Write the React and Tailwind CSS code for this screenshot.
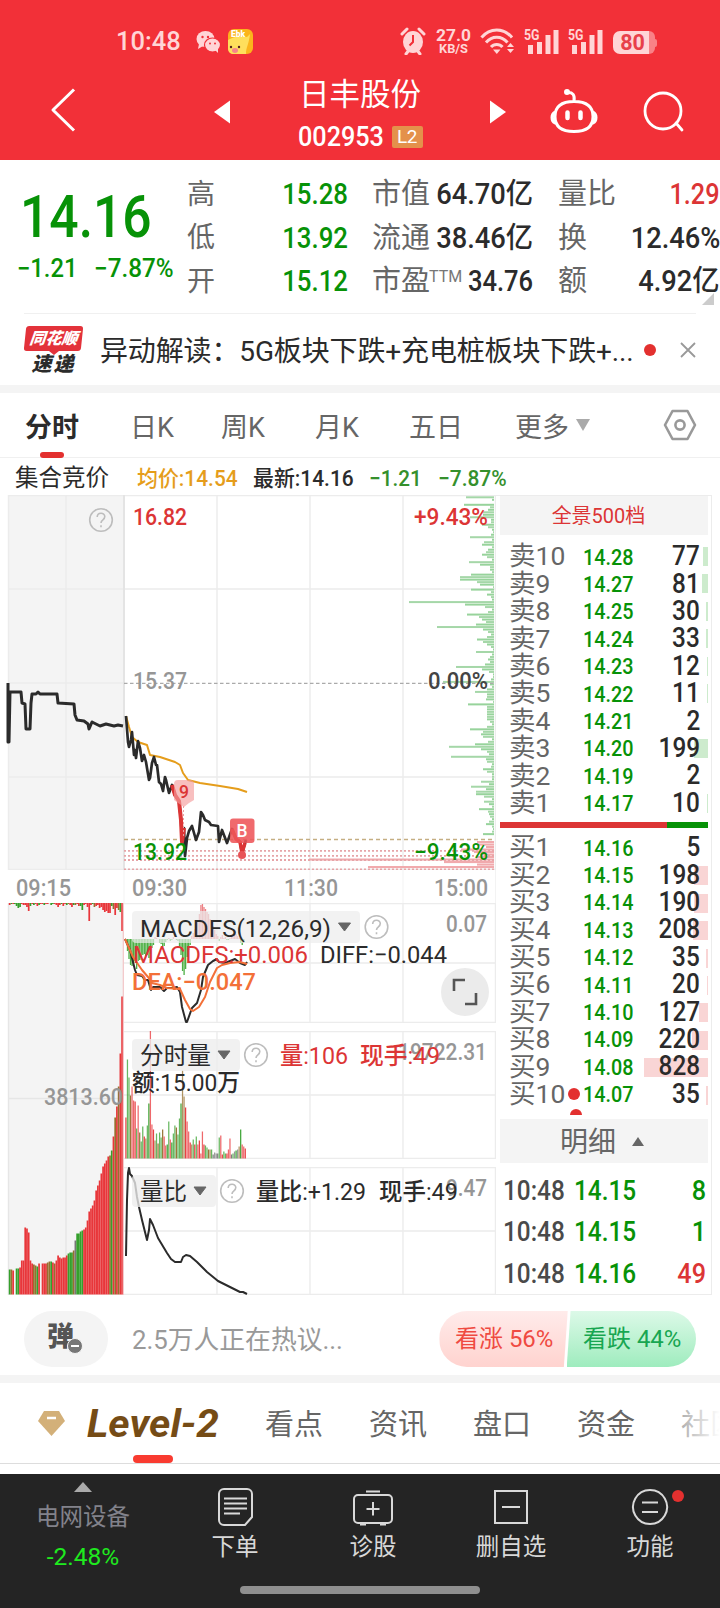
import { Fragment } from "react"

const GREEN = "#079207"
const RED = "#dc3535"
const GRAY = "#969696"
const DARK = "#2b2b2b"
const LINE = "#ececec"

const quoteRows = [
    ["高", "15.28", "市值", "64.70亿", "量比", "1.29"],
    ["低", "13.92", "流通", "38.46亿", "换", "12.46%"],
    ["开", "15.12", "市盈", "34.76", "额", "4.92亿"]
]

const sells = [
    ["卖10", "14.28", 77, 5],
    ["卖9", "14.27", 81, 6],
    ["卖8", "14.25", 30, 2],
    ["卖7", "14.24", 33, 2.5],
    ["卖6", "14.23", 12, 1],
    ["卖5", "14.22", 11, 1],
    ["卖4", "14.21", 2, 0],
    ["卖3", "14.20", 199, 14],
    ["卖2", "14.19", 2, 0],
    ["卖1", "14.17", 10, 0.6]
]

const buys = [
    ["买1", "14.16", 5, 0],
    ["买2", "14.15", 198, 14],
    ["买3", "14.14", 190, 14],
    ["买4", "14.13", 208, 15],
    ["买5", "14.12", 35, 2.5],
    ["买6", "14.11", 20, 1.3],
    ["买7", "14.10", 127, 9.5],
    ["买8", "14.09", 220, 16],
    ["买9", "14.08", 828, 64],
    ["买10", "14.07", 35, 2.5]
]

const trades = [
    ["10:48", "14.15", 8, "text-[#079207]"],
    ["10:48", "14.15", 1, "text-[#079207]"],
    ["10:48", "14.16", 49, "text-[#dc3535]"]
]

//挂单分布，每档 2.5px
const depth = [
    28, 2, 0, 30, 4, 6, 11, 11, 24, 3, 3, 12, 6, 2, 1, 3, 24, 2, 10, 12, 2, 6, 8, 12, 7, 2, 25, 14, 4, 4, 2, 23, 34, 34, 17, 14, 1,
    23, 3, 7, 3, 2, 85, 29, 9, 2, 6, 27, 15, 12, 8, 18, 57, 11, 6, 3, 7, 17, 11, 7, 3, 1, 18, 2, 4, 6, 4, 9, 38, 12, 5, 1, 1, 3, 51,
    4, 2, 7, 19, 7, 7, 8, 1, 26, 7, 7, 7, 7, 7, 7, 4, 2, 7, 24, 11, 13, 11, 2, 6, 19, 45, 13, 7, 5, 43, 8, 7, 2, 3, 11, 7, 2, 2, 2,
    13, 5, 23, 8, 18, 18, 10, 2, 10, 5, 2, 15, 6, 5, 4, 2, 5, 8, 2, 1, 2, 11
]
const depthBuy = [17, 17, 8, 33, 20, 14, 18, 185, 50, 17, 126]

const auctionLine = "8,683 8,742 9,742 10,692 21,692 22,703 25,704 26,729 30,729 31,703 32,694 36,694 38,692 40,694 57,694 58,703 74,704 75,715 77,720 84,721 88,724 89,729 92,722 96,724 100,726 106,724 114,726 118,725 123,726"
const priceLine = "126,716 128,742 129,747 131,740 132,732 134,755 135,750 136,758 138,741 140,748 142,761 144,755 146,762 149,780 150,778 152,763 154,757 156,765 157,765 159,782 161,784 163,791 165,777 166,780 169,793 172,785 175,795 179,801 181,820 182,842 184,828 185,856 187,838 189,831 192,826 196,840 199,832 201,812 203,815 205,820 209,822 211,825 218,826 219,842 222,830 227,843 232,829 236,839 240,842 242,853 245,843 246,840"
const avgLine = "126,716 129,727 132,737 138,742 147,745 150,755 160,757 175,762 180,765 183,773 188,780 200,783 220,786 238,789 247,792"

const auctionBars = [
    25, 25, 24, 0, 26, 26, 27, 34, 34, 67, 66, 62, 34, 31, 30, 29, 28, 31, 0, 31, 31, 31, 32, 33, 33, 32, 31, 34, 39, 37, 36, 37, 37,
    39, 41, 42, 42, 44, 54, 61, 61, 63, 64, 65, 67, 74, 83, 86, 89, 94, 104, 109, 114, 121, 128, 131, 134, 138, 139, 144, 158, 177,
    188, 208, 241, 298
]
const auctionColors = "gGr.ggrrrrrrrrGGgr.rrrGGgrGrrrrrrrgggGxggggrrrrrrrrrrrrrrrGgrGrGrr"

const auctionTop = [2, 1, 1, 1, 3, 5, 4, 1, 2, 2, 4, 8, 3, 1, 2, 1, 3, 2, 1, 1, 2, 1, 1, 0, 2, 1, 1, 2, 4, 2, 1, 3, 1, 2, 1, 2, 4, 2, 2, 1, 3, 3, 7, 2, 1, 4, 18, 2, 1, 4, 3, 2, 5, 4, 7, 9, 8, 10, 10, 3, 6, 12, 5, 7, 9, 28]
const auctionTopColors = "rgrggggrrrrrgrgrrgrrgrrrggrrrrgrrgGrrgGrrggrrrrrgGrrrrrrrrrgGrrGgr"

const volumeBars = [
    41, 99, 81, 63, 72, 58, 57, 30, 53, 26, 17, 32, 22, 20, 33, 55, 128, 34, 29, 18, 25, 15, 26, 21, 29, 22, 13, 14, 37, 19, 16, 25,
    33, 31, 24, 40, 55, 88, 62, 51, 37, 27, 16, 14, 19, 14, 22, 14, 18, 5, 27, 14, 13, 11, 9, 9, 9, 4, 6, 5, 5, 21, 23, 4, 7, 5, 5,
    9, 20, 4, 5, 7, 8, 9, 12, 29, 14, 12, 10
]
const volumeColors = "rggGrrrgrGggrGggrrrGgGggGrrggrgggGgggGGrrrrGgrgrrrrrggGGgxxxxgrrggrrrxgxgxGgrrr"

const macdBars = [
    0, -12, -20, -26, -27, -24, -22, -30, -22, -21, -18, -16, -15, -17, -16, -19, -15, -9, -6, 2, 1, 0, -4, -5, -8, -7, -3, -1, 1,
    -2, -1, 2, 0, -1, -2, -8, -16, -32, -36, -30, -18, -11, -6, 3, 6, 10, 13, 18, 25, 34, 35, 32, 30, 27, 25, 20, 17, 13, 9, 5, 3,
    -2, 2, 4, 1, 2, -1, -1, 1, 4, 5, 4, 5, 3, 1, -4, -6, -3, 0
]

const barFill = { r: "#e8363a", g: "#35a02c", G: "#96702f", x: "#777777" }

const diffLine = "125,939 130,950 135,970 137,975 142,976 145,980 148,980 151,990 153,987 160,987 164,991 167,988 172,988 177,987 180,992 182,1007 186,1022 187,1022 192,1008 197,1003 201,990 203,977 208,965 213,961 217,959 219,962 225,963 230,961 235,959 240,963 245,965 247,962"
const deaLine = "125,939 133,957 142,970 148,977 152,983 160,985 167,988 180,989 185,1000 190,1009 193,1011 199,1007 205,997 210,982 217,968 222,965 230,963 240,962 247,964"
const ratioLine = "126,1256 127,1200 128,1173 129,1168 130,1174 132,1176 135,1183 137,1197 139,1207 142,1220 147,1240 149,1230 150,1219 153,1225 158,1238 167,1253 171,1259 175,1262 181,1262 183,1257 186,1255 190,1256 197,1262 207,1272 218,1281 230,1287 240,1292 243,1292 247,1294"

// 图表内文字，w 为文字占用宽度
function Label({ x, y, w, size = 24, fill = GRAY, weight = 500, children }) {
    return (
        <text x={x} y={y} fontSize={size} fontWeight={weight} fill={fill} textLength={w} lengthAdjust="spacingAndGlyphs">
            {children}
        </text>
    )
}

function Help({ x, y }) {
    return (
        <g fill="none" stroke="#bdbdbd" strokeWidth="1.6">
            <circle cx={x} cy={y} r="11.3" />
            <path d={`M${x - 3.8} ${y - 3}c0-5 7.6-5 7.6-.4c0 3.4-3.8 3-3.8 6.4M${x} ${y + 5.2}v2`} />
        </g>
    )
}

function Grid({ x, top, mid, bottom }) {
    return (
        <g stroke={LINE} strokeWidth="1.4">
            <path d={`M124 ${top}H496M124 ${mid}H496M124 ${bottom}H496`} />
            {x.map((v) => (
                <path key={v} d={`M${v} ${top}V${bottom}`} />
            ))}
        </g>
    )
}

function Arrow({ x, y }) {
    return <path d={`M${x - 6} ${y - 4}h12l-6 8z`} fill="#666" stroke="#666" strokeLinejoin="round" />
}

function StatusBar() {
    return (
        <div className="h-[82px] pt-[27px] pl-[116px] flex items-start text-[#ffd5d6]">
            <span className="w-[80px] text-[25.500px] leading-[29px] font-medium">10:48</span>
            <svg width="24" height="24" viewBox="0 0 24 24" className="mt-[3px]">
                <ellipse cx="9.5" cy="9" rx="9" ry="8" fill="currentColor" />
                <path d="M3 14l-1 5 5-3z" fill="currentColor" />
                <ellipse cx="16.5" cy="15" rx="8" ry="7" fill="currentColor" stroke="#f23038" strokeWidth="1.2" />
                <path d="M19 20l3 3v-5z" fill="currentColor" />
                <g fill="#f23038"><circle cx="6.5" cy="7" r="1.2" /><circle cx="12" cy="7" r="1.2" /><circle cx="14" cy="13.5" r="1" /><circle cx="19" cy="13.5" r="1" /></g>
            </svg>
            <svg width="25" height="25" viewBox="0 0 25 25" className="ml-[8px] mt-[2px]">
                <rect width="25" height="25" rx="6" fill="#fbb41c" />
                <path d="M0 11c6-4 13-4 19-3l3-3c-1 10-4 13-4 20H6c-4 0-6-2-6-6z" fill="#ffdf5c" />
                <text x="3" y="8" fontSize="8.5" fontWeight="900" fill="#fff">Ebk</text>
                <circle cx="3" cy="18" r="1.2" fill="#522" /><circle cx="11" cy="18" r="1.2" fill="#522" />
                <ellipse cx="7" cy="21.5" rx="3" ry="2.4" fill="#f7848a" />
            </svg>
            <svg width="26" height="28" viewBox="0 0 26 28" className="ml-[147px]">
                <ellipse cx="13" cy="15" rx="10" ry="11" fill="currentColor" />
                <path d="M2 7l5-5M24 7l-5-5M6 27l3-4M20 27l-3-4" stroke="currentColor" strokeWidth="3" strokeLinecap="round" />
                <path d="M13 8v7l-3.5 3.5" stroke="#f23038" strokeWidth="2" fill="none" />
            </svg>
            <svg width="38" height="28" viewBox="0 0 38 28" className="ml-[9px]" fill="currentColor">
                <text x="1" y="14" fontSize="17" fontWeight="700" textLength="35" lengthAdjust="spacingAndGlyphs">27.0</text>
                <text x="4" y="26" fontSize="12.500" fontWeight="700" textLength="29" lengthAdjust="spacingAndGlyphs">KB/S</text>
            </svg>
            <svg width="36" height="26" viewBox="0 0 36 26" className="ml-[7px] mt-[1px]" fill="none" stroke="currentColor" strokeWidth="3">
                <path d="M1.5 9.500C10-.5 23.500-.5 32 9.500M6 14.500c6-7 15.500-7 21.500 0M11 19c3-3.500 8.500-3.500 11.500 0" />
                <path d="M13 21.500h7.500L16.800 26z" fill="currentColor" stroke="none" />
                <path d="M27 19l3.500-4 3.500 4zM27 21l3.500 4 3.500-4z" fill="currentColor" stroke="none" />
            </svg>
            {[0, 1].map((i) => (
                <svg key={i} width="36" height="26" viewBox="-1 0 36 26" className="ml-[8px] mt-px" fill="currentColor">
                    <text x="-1" y="12" fontSize="14.500" fontWeight="700" textLength="15.500" lengthAdjust="spacingAndGlyphs">5G</text>
                    <path d="M3 17h5v9H3zM12 14h5v12h-5zM20.500 7h5v19h-5zM28.500 2h5v24h-5z" />
                </svg>
            ))}
            <div className="ml-[9px] mt-[4px] flex items-center">
                <div className="w-[36px] h-[23px] rounded-l-[7px] bg-[#ffd5d6] text-[#e8404a] text-[21.500px] leading-[24px] font-bold text-center pl-[3px]">80</div>
                <div className="w-[6px] h-[23px] rounded-r-[6px] bg-[#f98186]" />
                <div className="w-[2px] h-[8px] rounded-r bg-[#f98186]" />
            </div>
        </div>
    )
}

function Header() {
    return (
        <header className="h-[160px] bg-[#f23038] text-white">
            <StatusBar />
            <div className="h-[78px] flex">
                <svg width="210" height="78" viewBox="0 82 210 78" fill="none" stroke="#fff" strokeWidth="3">
                    <path d="M74 89.500L53 110l21 20.500" strokeLinejoin="round" />
                </svg>
                <svg width="21" height="78" viewBox="0 0 21 78" fill="#fff">
                    <path d="M20 18.500v23L4 30z" />
                </svg>
                <div className="w-[258px] flex flex-col items-center">
                    <div className="text-[30.500px] leading-[26px]">日丰股份</div>
                    <div className="mt-[17px] h-[24px] flex items-center">
                        <span className="w-[86px] text-[28px] font-medium origin-left scale-x-[.9] whitespace-nowrap">002953</span>
                        <span className="w-[31px] h-[22px] ml-[8px] bg-[#e4914b] text-[19px] leading-[22px] text-center rounded-[2px] tracking-[-0.500px]">L2</span>
                    </div>
                </div>
                <svg width="21" height="78" viewBox="0 0 21 78" fill="#fff">
                    <path d="M1 18.500v23L17 30z" />
                </svg>
                <svg width="210" height="78" viewBox="510 82 210 78" fill="none" stroke="#fff" strokeWidth="3" strokeLinecap="round">
                    <path d="M574 101.500c-16 0-19 8-19 15 0 9 5 15 19 15s19-6 19-15c0-7-3-15-19-15zM555 112c-4 2-4 9 0 11M593 112c4 2 4 9 0 11M574 101c1-6-1-9-7-8.500" />
                    <circle cx="567" cy="92" r="1.500" fill="#fff" />
                    <path d="M567.500 112.500v5.500M580.500 112.500v5.500" strokeWidth="4.500" />
                    <circle cx="663" cy="111" r="18" strokeWidth="2.800" />
                    <path d="M676 123l6 7" strokeWidth="2.800" />
                </svg>
            </div>
        </header>
    )
}

function Quote() {
    return (
        <section className="h-[153px] pt-[13px] flex overflow-hidden">
            <div className="w-[187px] text-[#079207]">
                <div className="ml-[20px] mt-[14px] h-[60px] text-[60px] leading-[60px] font-medium origin-left scale-x-[.86] whitespace-nowrap">14.16</div>
                <div className="ml-[17px] flex text-[25px] leading-[44px] font-medium">
                    <span className="w-[77px] origin-left scale-x-[.95]">−1.21</span>
                    <span className="origin-left scale-x-[.97]">−7.87%</span>
                </div>
            </div>
            <div className="w-[533px]">
                {quoteRows.map((r, i) => (
                    <div key={r[0]} className="h-[43.500px] flex items-center text-[29px] leading-none text-[#2b2b2b] whitespace-nowrap">
                        <span className="w-[50px] text-[#666] text-[28px]">{r[0]}</span>
                        <span className="w-[111px] flex justify-end font-medium text-[#079207]"><span className="origin-right scale-x-[.89]">{r[1]}</span></span>
                        <span className="w-[62px] ml-[24px] text-[#666]">
                            {r[2]}
                        </span>
                        {i === 2 && <span className="w-0 overflow-visible text-[16px] text-[#777] mb-[10px] ml-[-5px] mr-[5px]">TTM</span>}
                        <span className="w-[99px] flex justify-end font-medium">
                            <span className={i === 2 ? "origin-right scale-x-[.88]" : "origin-right scale-x-[.94]"}>{r[3]}</span>
                        </span>
                        <span className="w-[62px] ml-[25px] text-[#666] text-[29px]">{r[4]}</span>
                        <span className={i === 0 ? "flex-1 flex justify-end font-medium text-[#dc3535]" : "flex-1 flex justify-end font-medium"}>
                            <span className={i === 0 ? "origin-right scale-x-[.87]" : "origin-right scale-x-[.94]"}>{r[5]}</span>
                        </span>
                    </div>
                ))}
                <svg width="12" height="12" viewBox="0 0 12 12" className="ml-auto mr-[6px] mt-[-11px]"><path d="M12 0v12H0z" fill="#ccc" /></svg>
            </div>
        </section>
    )
}

function News() {
    return (
        <section className="mx-[24px] h-[72px] border-t border-[#f0f0f0] flex items-center">
            <div className="w-[57px] ml-px mr-px italic font-black text-center leading-none">
                <div className="h-[25px] bg-[#e3323a] rounded-[3px] -skew-x-6 text-white text-[16px] leading-[25px]">同花顺</div>
                <svg width="10" height="4" viewBox="0 0 10 4" className="mx-auto"><path d="M0 0h10L5 4z" fill="#e3323a" /></svg>
                <div className="text-[#2b2b2b] text-[20px] leading-[19px] tracking-[2px]">速递</div>
            </div>
            <div className="w-[536px] ml-[17px] pt-[4px] text-[28px] text-[#2b2b2b] whitespace-nowrap tracking-[-0.140px]">异动解读：5G板块下跌+充电桩板块下跌+...</div>
            <div className="w-[12px] h-[12px] ml-[8px] rounded-full bg-[#e3302f]" />
            <svg width="16" height="16" viewBox="0 0 16 16" className="ml-[24px] shrink-0" stroke="#999" strokeWidth="1.800"><path d="M1 1l14 14M15 1L1 15" /></svg>
        </section>
    )
}

function PeriodTabs() {
    return (
        <nav className="h-[65px] border-b border-[#f0f0f0] flex text-[27px] leading-[70px] text-[#666] whitespace-nowrap">
            <div className="w-[107px] pl-[25px] font-bold text-[#2b2b2b] relative">
                分时
                <span className="absolute left-[40px] bottom-[-1px] w-[24px] h-[6px] rounded-full bg-[#e3302f]" />
            </div>
            <div className="w-[91px] ml-[23px]">日K</div>
            <div className="w-[94px]">周K</div>
            <div className="w-[94px]">月K</div>
            <div className="w-[106px]">五日</div>
            <div>更多</div>
            <svg width="16" height="12" viewBox="0 0 16 12" className="mt-[26px] ml-[6px]"><path d="M1 0h14L8 12z" fill="#aaa" /></svg>
            <svg width="34" height="32" viewBox="0 0 34 32" className="mt-[16px] ml-[72px]" fill="none" stroke="#999" strokeWidth="2.600" strokeLinejoin="round">
                <path d="M9.500 2h15L32 16l-7.500 14h-15L2 16z" />
                <circle cx="17" cy="16" r="4.600" />
            </svg>
        </nav>
    )
}

function MinuteChart() {
    return (
        <svg width="496" height="375" viewBox="0 495 496 375">
            <rect x="8" y="495" width="116" height="375" fill="#f4f4f4" />
            <g stroke={LINE} strokeWidth="1.4">
                <path d="M8 495.500H496M8 589H496M8 777H496M8 869.500H496M8 683H124" />
                <path d="M8.500 495V870M66 495V870M217 495V870M310 495V870M403 495V870M495.500 495V870" />
                <path d="M124 495V870" strokeWidth="2" stroke="#e4e4e4" />
            </g>
            {depth.map((len, i) => (
                <rect key={i} x={494 - len} y={496.3 + i * 2.495} width={len} height="2" fill={i % 2 ? "#97d39b" : "#a5d7a8"} />
            ))}
            {depthBuy.map((len, i) => (
                <rect key={i} x={494 - len} y={841 + i * 2.5} width={len} height="2.1" fill="#f1aaad" />
            ))}
            <path d="M124 683.300H494" stroke="#aaa" strokeWidth="1.300" strokeDasharray="3.500 2.500" />
            <path d="M124 839.500H494" stroke="#c5ae82" strokeWidth="1.300" strokeDasharray="4 3" />
            <path d="M124 850.800H494M124 855.800H494M124 860H494M124 869.500H494" stroke="#e6a5a8" strokeWidth="1.800" strokeDasharray="2 2" />
            <Label x={133} y={525} w={54} fill={RED}>16.82</Label>
            <Label x={414} y={525} w={74} fill={RED}>+9.43%</Label>
            <Label x={133} y={689} w={54}>15.37</Label>
            <Label x={428} y={689} w={60} fill="#444">0.00%</Label>
            <Label x={414} y={859.500} w={74} fill={GREEN}>−9.43%</Label>
            <Help x={101} y={520} />
            <polyline points={auctionLine} fill="none" stroke={DARK} strokeWidth="3" strokeLinejoin="round" />
            <polyline points={avgLine} fill="none" stroke="#e59d1b" strokeWidth="2" strokeLinejoin="round" />
            <polyline points={priceLine} fill="none" stroke={DARK} strokeWidth="2.700" strokeLinejoin="round" />
            <polyline points="172,785 175,795 179,801 181,820 182,842 184,828" fill="none" stroke={RED} strokeWidth="4" strokeLinejoin="round" />
            <Label x={133} y={859.500} w={54} fill={GREEN}>13.92</Label>
            <path d="M183.500 806v32" stroke="#eba0a2" strokeDasharray="2 2" />
            <path d="M178 780h12a4 4 0 0 1 4 4v16l-5 3-5 4-6-4-4-3v-16a4 4 0 0 1 4-4z" fill="#f59c9c" fillOpacity=".65" />
            <Label x={179} y={798} w={10} size={18} fill={RED}>9</Label>
            <polyline points="232,829 236,839 240,842 242,853 245,843" fill="none" stroke={RED} strokeWidth="3.500" />
            <rect x="230" y="818.500" width="24.500" height="24.500" rx="3" fill="#ee5559" fillOpacity=".88" />
            <Label x={236.500} y={837} w={11} size={19} fill="#fff">B</Label>
            <circle cx="242" cy="855" r="4" fill="#e85357" />
        </svg>
    )
}

function TimeAxis() {
    return (
        <svg width="496" height="33" viewBox="0 870 496 33">
            <path d="M124 870v33M217 870v33M310 870v33M403 870v33M495.500 870v33" stroke="#f3f3f3" />
            <Label x={16} y={895.500} w={55}>09:15</Label>
            <Label x={132} y={895.500} w={55}>09:30</Label>
            <Label x={284} y={895.500} w={54}>11:30</Label>
            <Label x={434} y={895.500} w={54}>15:00</Label>
        </svg>
    )
}

function AuctionVolume() {
    return (
        <svg width="124" height="392" viewBox="0 903 124 392">
            <rect x="8" y="903" width="116" height="392" fill="#f4f4f4" />
            <path d="M8 903.500h116M8.500 903v392M66 903v392M8 1098.500h116" stroke="#e6e6e6" strokeWidth="1.400" />
            {auctionTop.map((h, i) => (
                <rect key={i} x={8.8 + i * 1.73} y="903" width="1.73" height={h} fill={barFill[auctionTopColors[i]]} />
            ))}
            {auctionBars.map((h, i) => (
                <rect key={i} x={8.8 + i * 1.73} y={1294.5 - h} width="1.73" height={h} fill={barFill[auctionColors[i]] || "#f4f4f4"} />
            ))}
            <path d="M123.300 903v392" stroke="#f3c6c8" strokeWidth="1.200" />
            <Label x={44} y={1104.500} w={79}>3813.60</Label>
        </svg>
    )
}

function MacdChart() {
    return (
        <svg width="372" height="120" viewBox="124 903 372 120">
            <Grid x={[217, 310, 403, 495.5]} top={903.5} mid={963} bottom={1022.5} />
            {macdBars.map((h, i) => (
                <rect key={i} x={125.3 + i * 1.53} y={h > 0 ? 939 - h : 939} width="1.3" height={Math.abs(h)} fill={h > 0 ? "#ec8185" : "#4caf44"} />
            ))}
            <rect x="132" y="911" width="228" height="32" rx="4" fill="#ededed" fillOpacity=".7" />
            <polyline points={diffLine} fill="none" stroke={DARK} strokeWidth="2" strokeLinejoin="round" />
            <polyline points={deaLine} fill="none" stroke="#f37038" strokeWidth="2" strokeLinejoin="round" />
            <Label x={140} y={936.500} w={191} fill={DARK} weight={400}>MACDFS(12,26,9)</Label>
            <Arrow x={344.500} y={927} />
            <Help x={376.500} y={927} />
            <Label x={446} y={932} w={41}>0.07</Label>
            <Label x={133} y={963} w={175} fill={RED} weight={450}>MACDFS:+0.006</Label>
            <Label x={320} y={963} w={127} fill={DARK} weight={450}>DIFF:−0.044</Label>
            <Label x={132} y={990} w={124} fill="#f37038" weight={500}>DEA:−0.047</Label>
            <circle cx="465" cy="992" r="24" fill="#ebebeb" />
            <path d="M454 991v-11h11M476 993v11h-11" fill="none" stroke="#555" strokeWidth="2.600" />
        </svg>
    )
}

function VolumeChart() {
    return (
        <svg width="372" height="128" viewBox="124 1031 372 128">
            <Grid x={[217, 310, 403, 495.5]} top={1031.5} mid={1095} bottom={1158.500} />
            {volumeBars.map((h, i) => (
                <rect key={i} x={125.3 + i * 1.53} y={1158.500 - h} width="1.250" height={h} fill={barFill[volumeColors[i]]} fillOpacity={i % 3 ? ".75" : ".95"} />
            ))}
            <rect x="132" y="1039" width="108" height="32" rx="4" fill="#ededed" fillOpacity=".78" />
            <Label x={140} y={1064} w={71} fill={DARK} weight={400}>分时量</Label>
            <Arrow x={224} y={1055} />
            <Help x={256} y={1055} />
            <Label x={398} y={1060} w={89}>19722.31</Label>
            <Label x={280} y={1064} w={68} fill={RED} weight={450}>量:106</Label>
            <Label x={360} y={1064} w={80} fill={RED} weight={450}>现手:49</Label>
            <Label x={132} y={1091} w={108} fill={DARK} weight={450}>额:15.00万</Label>
        </svg>
    )
}

function RatioChart() {
    return (
        <svg width="372" height="128" viewBox="124 1167 372 128">
            <Grid x={[217, 310, 403, 495.5]} top={1167.5} mid={1231} bottom={1294.5} />
            <polyline points={ratioLine} fill="none" stroke={DARK} strokeWidth="2" strokeLinejoin="round" />
            <rect x="132" y="1175" width="84" height="32" rx="4" fill="#ededed" fillOpacity=".78" />
            <Label x={140} y={1200} w={47} fill={DARK} weight={400}>量比</Label>
            <Arrow x={200} y={1191} />
            <Help x={232} y={1191} />
            <Label x={446} y={1196} w={41}>9.47</Label>
            <Label x={256} y={1200} w={110} fill={DARK} weight={450}>量比:+1.29</Label>
            <Label x={379} y={1200} w={79} fill={DARK} weight={450}>现手:49</Label>
        </svg>
    )
}

function OrderRow({ row, buy }) {
    const [name, price, qty, bar] = row
    return (
        <div className="relative h-[27.400px] flex items-center leading-none whitespace-nowrap">
            <span className={buy ? "absolute right-0 top-[5px] h-[19px] bg-[#f9d5d5]" : "absolute right-0 top-[4px] h-[19px] bg-[#cdebcd]"} style={{ width: bar }} />
            <span className="w-[83px] pl-[9px] text-[26.500px] text-[#666]">{name}</span>
            <span className="w-[55px] text-[22px] font-medium text-[#079207] origin-left scale-x-[.9] mt-[2px]">{price}</span>
            <span className="relative flex-1 pr-[8px] flex justify-end text-[27px] font-medium text-[#2b2b2b]"><span className="origin-right scale-x-[.9]">{qty}</span></span>
            {name === "买10" && <span className="absolute left-[68px] top-[7px] w-[12px] h-[12px] rounded-full bg-[#e3302f]" />}
        </div>
    )
}

function OrderBook() {
    return (
        <aside className="w-[216px] h-[800px] pl-[4px] pr-[3px] border-r border-t border-b border-[#ececec]">
            <div className="h-[39px] bg-[#f4f4f4] pr-[11px] text-center text-[20px] leading-[40px] text-[#dc3535]">全景500档</div>
            <div className="pt-[8px] h-[287px]">
                {sells.map((r) => <OrderRow key={r[0]} row={r} />)}
            </div>
            <div className="h-[6px] bg-[#079207]"><div className="w-[167px] h-full bg-[#dc3535]" /></div>
            <div className="pt-[6px] h-[281px]">
                {buys.map((r) => <OrderRow key={r[0]} row={r} buy />)}
            </div>
            <div className="h-[6px] overflow-hidden pl-[70px]"><div className="w-[12px] h-[12px] rounded-full bg-[#e3302f]" /></div>
            <div className="h-[44px] mt-[4px] bg-[#f4f4f4] flex items-center justify-center text-[28px] leading-none text-[#666]">
                <span className="pt-[4px]">明细</span>
                <svg width="12" height="9" viewBox="0 0 12 9" className="ml-[16px] mr-[4px]"><path d="M0 9L6 0l6 9z" fill="#666" /></svg>
            </div>
            <div className="pt-[7px]">
                {trades.map(([time, price, qty, color], i) => (
                    <div key={i} className="h-[41.500px] pl-[3px] pr-[2px] flex items-center text-[28px] leading-none font-medium whitespace-nowrap">
                        <span className="w-[71px] text-[#4a4a4a] origin-left scale-x-[.87]">{time}</span>
                        <span className="w-[70px] text-[#079207] origin-left scale-x-[.87]">{price}</span>
                        <span className={`flex-1 text-right origin-right scale-x-[.9] ${color}`}>{qty}</span>
                    </div>
                ))}
            </div>
        </aside>
    )
}

function Market() {
    return (
        <section>
            <div className="h-[37px] pt-[3px] pl-[15px] flex items-center text-[22px] font-medium text-[#2b2b2b] whitespace-nowrap">
                <span className="w-[122px] pt-[2px] text-[23.500px] font-normal">集合竞价</span>
                <span className="w-[116px] text-[#e59d1b] origin-left scale-x-[.95]">均价:14.54</span>
                <span className="w-[116px] origin-left scale-x-[.95]">最新:14.16</span>
                <span className="w-[69px] text-[#35902c] origin-left scale-x-[.94]">−1.21</span>
                <span className="text-[#35902c] origin-left scale-x-[.95]">−7.87%</span>
            </div>
            <div className="flex">
                <div className="w-[496px]">
                    <MinuteChart />
                    <TimeAxis />
                    <div className="flex">
                        <AuctionVolume />
                        <div className="flex flex-col gap-[8px]">
                            <MacdChart />
                            <VolumeChart />
                            <RatioChart />
                        </div>
                    </div>
                </div>
                <OrderBook />
            </div>
        </section>
    )
}

function Discussion() {
    return (
        <section className="h-[80px] pt-[16px] px-[24px] flex">
            <div className="w-[84px] h-[56px] rounded-full bg-[#f4f4f4] relative text-[27px] leading-[52px] font-black text-[#555] pl-[23px]">
                弹
                <span className="absolute left-[43px] top-[27px] w-[16px] h-[16px] rounded-full bg-[#777] border border-[#f4f4f4] flex items-center justify-center">
                    <span className="w-[8px] h-[2px] bg-white" />
                </span>
            </div>
            <div className="w-[332px] pl-[24px] text-[25.800px] leading-[58px] text-[#999]">2.5万人正在热议...</div>
            <div className="w-[257px] h-[56px] rounded-full overflow-hidden flex text-[23.500px] leading-[57px] bg-white whitespace-nowrap">
                <div className="w-[129px] pl-[16px] bg-linear-to-b from-[#ffebea] to-[#ffd3cf] text-[#ef4a41] [clip-path:polygon(0_0,100%_0,97%_100%,0_100%)]"><span className="inline-block origin-left scale-x-[1.02]">看涨 56%</span></div>
                <div className="w-[130px] -ml-px pl-[16px] bg-linear-to-b from-[#dcf9e8] to-[#9eecbe] text-[#18a651] [clip-path:polygon(3%_0,100%_0,100%_100%,0_100%)]"><span className="inline-block origin-left scale-x-[1.02]">看跌 44%</span></div>
            </div>
        </section>
    )
}

function InfoTabs() {
    return (
        <nav className="h-[81px] border-b border-[#ddd] flex text-[29px] leading-[84px] text-[#666] whitespace-nowrap overflow-hidden relative [&>div]:shrink-0">
            <svg width="27" height="25" viewBox="0 0 27 25" className="ml-[38px] mt-[28px]">
                <path d="M6 0h15l6 10-13.500 15L0 10z" fill="#d3b079" />
                <path d="M9 7h9" stroke="#fff" strokeWidth="2.500" />
            </svg>
            <div className="w-[200px] pl-[22px] relative italic font-bold text-[38px] leading-[83px] text-[#754c16]">
                <span className="inline-block origin-left scale-x-[1.07]">Level-2</span>
                <span className="absolute left-[68px] bottom-0 w-[40px] h-[8px] rounded-full bg-[#f93b30]" />
            </div>
            <div className="w-[104px]">看点</div>
            <div className="w-[104px]">资讯</div>
            <div className="w-[104px]">盘口</div>
            <div className="w-[104px]">资金</div>
            <div>社区</div>
            <span className="absolute right-0 top-0 w-[60px] h-full bg-linear-to-r from-white/20 to-white" />
        </nav>
    )
}

const navItems = [
    ["下单", <path d="M6 1h23a5 5 0 0 1 5 5v23l-7 8H6a5 5 0 0 1-5-5V6a5 5 0 0 1 5-5zM6 10.500h23M6 15.500h23M6 20.500h23M6 25.500h16" />],
    ["诊股", <path d="M12 3.500h14M4 7h30a4 4 0 0 1 4 4v20a4 4 0 0 1-4 4H4a4 4 0 0 1-4-4V11a4 4 0 0 1 4-4zM19 14v13.500M12.500 21h13M6 36.500h6M26 36.500h6" />],
    ["删自选", <path d="M1 3h32v32H1zM8 19h18" />],
    ["功能", <path d="M17 2a17 17 0 1 0 .1 0zM9 14.500h16M9 24h16" />]
]

function BottomNav() {
    return (
        <footer className="h-[134px] bg-[#242424] text-[23.500px] text-[#d8d8d8]">
            <div className="h-[112px] flex">
                <div className="w-[166px] pt-[8px] flex flex-col items-center">
                    <svg width="18" height="10" viewBox="0 0 18 10"><path d="M9 0l9 10H0z" fill="#aaa" /></svg>
                    <div className="mt-[8px] leading-[34px] text-[#82828b]">电网设备</div>
                    <div className="mt-[7px] leading-[32px] text-[24.500px] text-[#1fea1f]">-2.48%</div>
                </div>
                {navItems.map(([name, icon], i) => (
                    <Fragment key={name}>
                        <div className={["w-[138px]", "w-[138px]", "w-[138px]", "w-[140px]"][i] + " pt-[14px] flex flex-col items-center relative"}>
                            <svg width="40" height="39" viewBox={i === 1 ? "-1 0 40 39" : "-3 0 40 39"} fill="none" stroke="#d8d8d8" strokeWidth="2">{icon}</svg>
                            <div className="mt-[3px] leading-[34px]">{name}</div>
                            {name === "功能" && <span className="absolute left-[92px] top-[16px] w-[12px] h-[12px] rounded-full bg-[#e3302f]" />}
                        </div>
                    </Fragment>
                ))}
            </div>
            <div className="w-[240px] h-[8px] mx-auto rounded-full bg-[#8f8f8f]" />
        </footer>
    )
}

export default function App() {
    return (
        <div className="w-[720px] h-[1608px] overflow-hidden bg-white font-['Roboto','Noto_Sans_CJK_SC',sans-serif] [&_svg]:shrink-0">
            <Header />
            <Quote />
            <News />
            <div className="h-[8px] bg-[#f4f4f4]" />
            <PeriodTabs />
            <Market />
            <Discussion />
            <div className="h-[8px] bg-[#f4f4f4]" />
            <InfoTabs />
            <div className="h-[10px]" />
            <BottomNav />
        </div>
    )
}
